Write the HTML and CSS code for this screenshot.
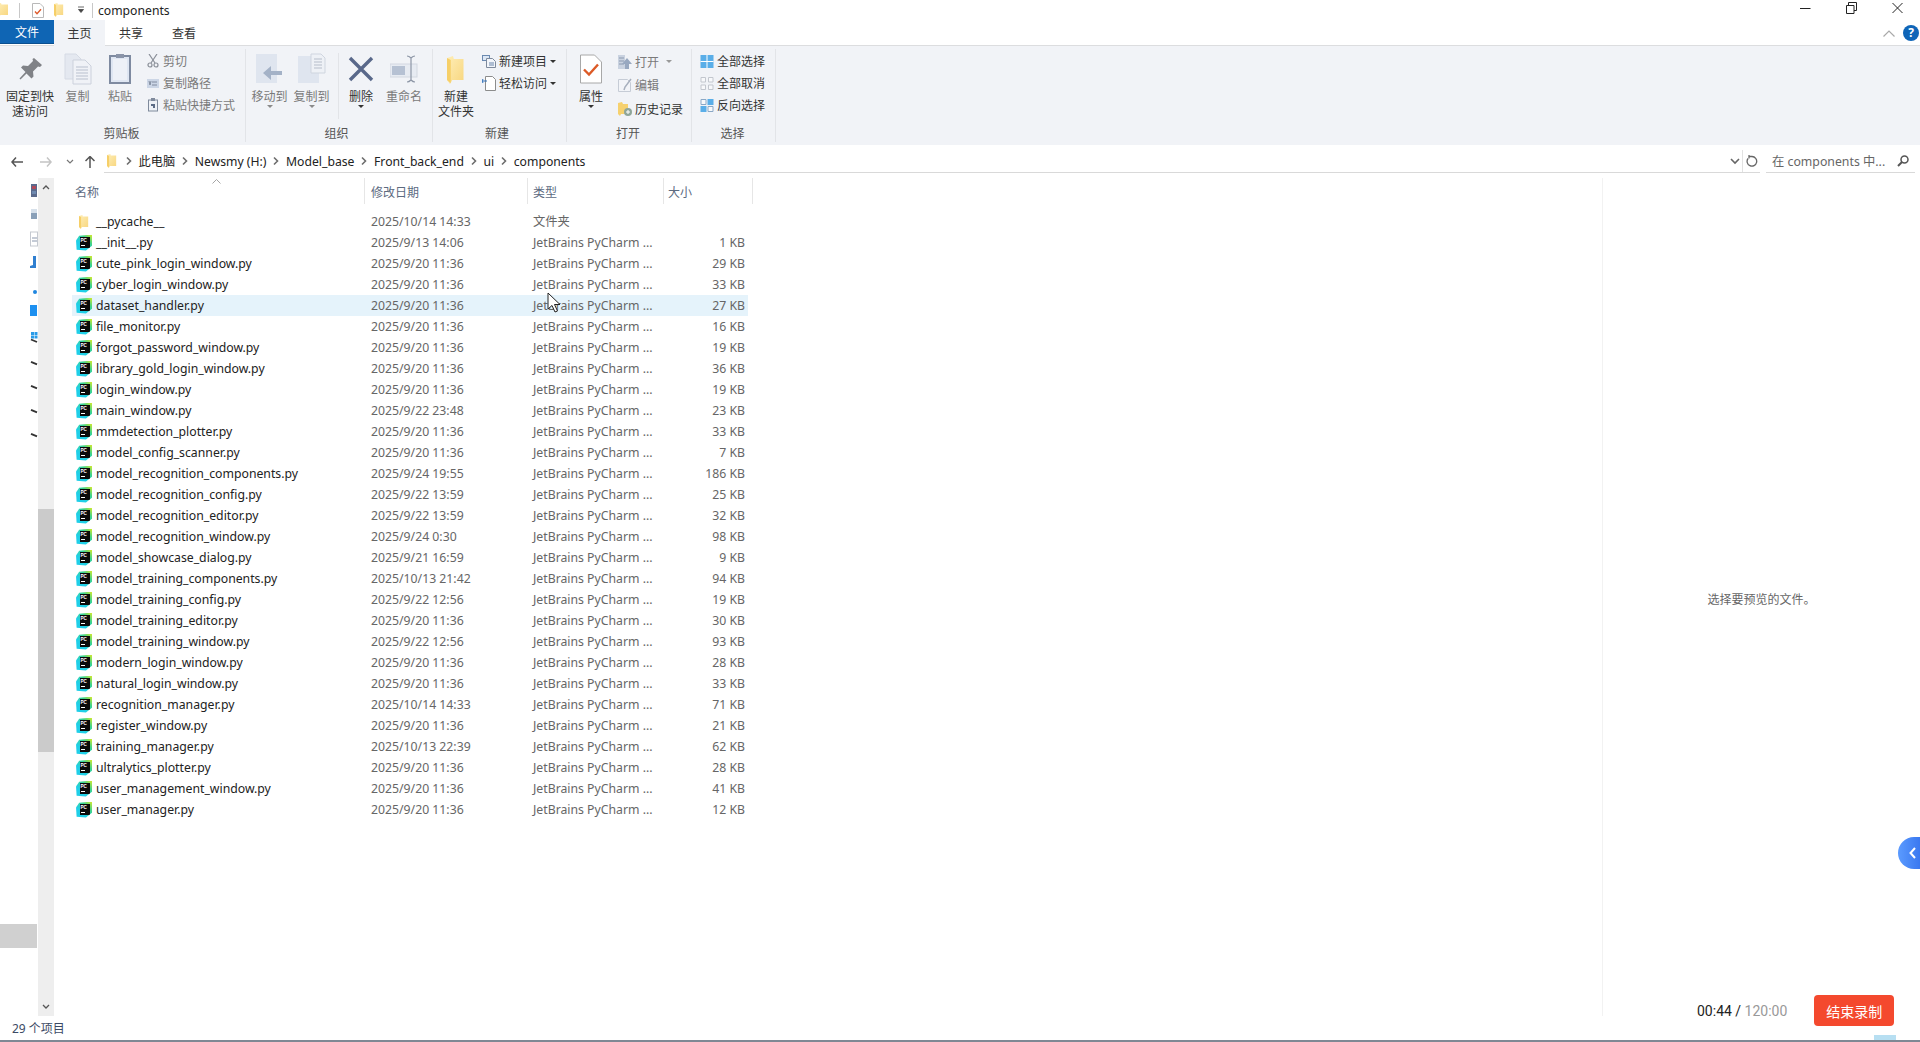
FILE: index.html
```html
<!DOCTYPE html>
<html lang="zh-CN">
<head>
    <meta charset="UTF-8">
    <title>components</title>
    <link rel="stylesheet" href="styles.css">
</head>
<body>
    <svg class="defs" width="0" height="0">
        <defs>
            <linearGradient id="folder-grad" x1="0" y1="0" x2="1" y2="1">
                <stop offset="0" stop-color="#feeeb8"/>
                <stop offset="1" stop-color="#f8d67e"/>
            </linearGradient>
        </defs>
        <symbol id="folder" viewBox="0 0 12 14" preserveAspectRatio="none">
            <path d="M0 1 L4 0 L4.5 1.5 L11 1.5 L11 12 L3.5 12 L2 14 L0 12 Z" fill="url(#folder-grad)"/>
            <path d="M0 1 L2.5 2 L2.5 13.5 L0 12 Z" fill="#f6cf68"/>
        </symbol>
        <symbol id="crumb" viewBox="0 0 8 10">
            <path d="M2 1.5 L5.5 5 L2 8.5" fill="none" stroke="#6d6d6d" stroke-width="1.6"/>
        </symbol>
    </svg>

    <header class="titlebar">
        <svg class="qa-folder-clip" width="9" height="14"><use href="#folder" x="-3" width="12" height="14"/></svg>
        <span class="qa-sep qa-sep-first"></span>
        <svg class="qa-doc" width="12" height="15" viewBox="0 0 12 15"><path d="M.5.5h7.500l3.500 3.500v10.500h-11z" fill="#fff" stroke="#b9b9b9"/><path d="M3 8.500l2 2.200 4-4.500" fill="none" stroke="#dd5a2b" stroke-width="1.400"/></svg>
        <svg class="qa-folder" width="10" height="14"><use href="#folder" width="10" height="14"/></svg>
        <svg class="qa-drop" width="7" height="8" viewBox="0 0 7 8"><path d="M0 1h6M.5 3.500h5l-2.500 3z" stroke="#444" fill="#444" stroke-width=".8"/></svg>
        <span class="qa-sep"></span>
        <span class="title-text">components</span>
        <div class="win-controls">
            <svg width="11" height="12" viewBox="0 0 11 12"><path d="M0 6.500h10.500" stroke="#222"/></svg>
            <svg width="11" height="12" viewBox="0 0 11 12"><path d="M.5 3.500h7.500v8h-7.500zM2.500 3.500v-3h8v8h-2.500" fill="none" stroke="#222"/></svg>
            <svg width="11" height="12" viewBox="0 0 11 12"><path d="M.5 1l10 10M10.500 1l-10 10" stroke="#222"/></svg>
        </div>
    </header>

    <nav class="tabs">
        <div class="tab tab-file">文件</div>
        <div class="tab tab-home">主页</div>
        <div class="tab tab-share">共享</div>
        <div class="tab tab-view">查看</div>
        <div class="tabs-right">
            <svg width="12" height="7" viewBox="0 0 12 7"><path d="M.5 6.500l5.500-5.500 5.500 5.500" fill="none" stroke="#a9a9a9" stroke-width="1.200"/></svg>
            <span class="help">?</span>
        </div>
    </nav>

    <section class="ribbon">
        <div class="group group-clip">
            <div class="group-body">
                <div class="big-btn btn-pin">
                    <svg width="30" height="30" viewBox="0 0 30 30"><path d="M19 4l8 7-2 2-2-.5-5 5 .5 5-2 2-5-5-6 6-1-1 6-6.500-4.500-4.500 2-2 5 .5 5-5-.5-2z" fill="#808287"/></svg>
                    <span>固定到快<br>速访问</span>
                </div>
                <div class="big-btn btn-copy off">
                    <svg width="28" height="32" viewBox="0 0 28 32"><path d="M1 1h11l5 5v20h-16z" fill="#e4e8f0" stroke="#d5dae4"/><path d="M9 7h12l6 6v18h-18z" fill="#f0f2f7" stroke="#ccd1dc"/><path d="M12 14h12M12 17h12M12 20h12M12 23h12M12 26h12" stroke="#b9c0ce"/></svg>
                    <span>复制</span>
                </div>
                <div class="big-btn btn-paste off">
                    <svg width="22" height="32" viewBox="0 0 22 32"><rect x="1" y="3" width="20" height="27" fill="#dfe6f2" stroke="#7e8aa0" stroke-width="2"/><rect x="4" y="6" width="14" height="21" fill="#eef1f7"/><rect x="7" y="1" width="8" height="4" fill="#8a94a8"/></svg>
                    <span>粘贴</span>
                </div>
                <div class="small-col clip-col off">
                    <div class="small-btn">
                        <svg width="12" height="14" viewBox="0 0 12 14"><path d="M2 0l6 9M10 0l-6 9" stroke="#8a8f98" stroke-width="1.200"/><circle cx="3" cy="11" r="2" fill="none" stroke="#8a8f98" stroke-width="1.200"/><circle cx="9" cy="11" r="2" fill="none" stroke="#8a8f98" stroke-width="1.200"/></svg>
                        剪切
                    </div>
                    <div class="small-btn">
                        <svg width="12" height="10" viewBox="0 0 12 10"><rect width="12" height="9" y="1" fill="#ccd6e6"/><path d="M2 3l1 4 1-4M5 4h5M5 7h5" stroke="#6f7a8e" stroke-width=".8" fill="none"/></svg>
                        复制路径
                    </div>
                    <div class="small-btn">
                        <svg width="12" height="14" viewBox="0 0 12 14"><rect x="1.500" y="2" width="9" height="11" fill="#eef1f6" stroke="#7f8a9c"/><rect x="4" y="0" width="4" height="3" fill="#7f8a9c"/><path d="M4 6h4v4h-2v-2h-2z" fill="#5b6b85"/></svg>
                        粘贴快捷方式
                    </div>
                </div>
            </div>
            <div class="group-label">剪贴板</div>
        </div>

        <div class="group group-org">
            <div class="group-body">
                <div class="big-btn btn-move off">
                    <svg width="28" height="30" viewBox="0 0 28 30"><rect x="0" y="0" width="21" height="29" fill="#dfe5ef"/><path d="M26 17h-11v-5l-8 7 8 7v-5h11z" fill="#a4b2c7"/></svg>
                    <span>移动到</span>
                    <i class="caret"></i>
                </div>
                <div class="big-btn btn-copyto off">
                    <svg width="28" height="30" viewBox="0 0 28 30"><rect x="0" y="2" width="21" height="27" fill="#dfe5ef"/><path d="M13 0h10l4 4v15h-14z" fill="#eef1f6" stroke="#cfd5df"/><path d="M16 5h8M16 8h8M16 11h8M16 14h8" stroke="#b6bdca"/></svg>
                    <span>复制到</span>
                    <i class="caret"></i>
                </div>
                <span class="v-line"></span>
                <div class="big-btn btn-del">
                    <svg width="26" height="26" viewBox="0 0 26 26"><path d="M2 2l22 22M24 2l-22 22" stroke="#59688a" stroke-width="3.400"/></svg>
                    <span>删除</span>
                    <i class="caret dark"></i>
                </div>
                <div class="big-btn btn-rename off">
                    <svg width="28" height="28" viewBox="0 0 28 28"><rect x="0" y="9" width="27" height="13" fill="#e7ebf2" stroke="#d3d8e1"/><rect x="2" y="11" width="13" height="9" fill="#b6c1d3"/><path d="M17 1c2 0 3 1 4 2 1-1 2-2 4-2M21 3v22M17 27c2 0 3-1 4-2 1 1 2 2 4 2" fill="none" stroke="#8d96a6" stroke-width="1.200"/></svg>
                    <span>重命名</span>
                </div>
            </div>
            <div class="group-label">组织</div>
        </div>

        <div class="group group-new">
            <div class="group-body">
                <div class="big-btn btn-newfolder">
                    <svg class="big-folder" width="18" height="28"><use href="#folder" width="18" height="28"/></svg>
                    <span>新建<br>文件夹</span>
                </div>
                <div class="small-col new-col">
                    <div class="small-btn">
                        <svg width="14" height="13" viewBox="0 0 14 13"><rect x=".5" y=".5" width="7" height="5" fill="#dce7f5" stroke="#6b89b0"/><path d="M4.500 3.500h6l3 3v6h-9z" fill="#f2f5fa" stroke="#7e8a9c"/><rect x="7" y="7" width="5" height="4" fill="#aebdd2"/></svg>
                        新建项目<i class="drop"></i>
                    </div>
                    <div class="small-btn">
                        <svg width="14" height="15" viewBox="0 0 14 15"><path d="M3.500.5h7l3 3v11h-10z" fill="#fff" stroke="#8c8c8c"/><path d="M0 5h5M1 3L0 5l1 2" stroke="#2e6fb8" fill="none"/></svg>
                        轻松访问<i class="drop"></i>
                    </div>
                </div>
            </div>
            <div class="group-label">新建</div>
        </div>

        <div class="group group-open">
            <div class="group-body">
                <div class="big-btn btn-props">
                    <svg width="22" height="29" viewBox="0 0 22 29"><path d="M.5.5h14l7 7v21h-21z" fill="#fff" stroke="#a8a8a8"/><path d="M4 15l5 5 9-10" fill="none" stroke="#dc5a26" stroke-width="2.400"/></svg>
                    <span>属性</span>
                    <i class="caret dark"></i>
                </div>
                <div class="small-col open-col">
                    <div class="small-btn off">
                        <svg width="14" height="14" viewBox="0 0 14 14"><rect width="7" height="14" fill="#c9d2e0"/><path d="M1 3h5M1 6h5M1 9h5" stroke="#8c9ab0"/><path d="M9 3l5 6h-3v5h-4v-5h-3z" fill="#98a8c0"/></svg>
                        打开<i class="drop pale"></i>
                    </div>
                    <div class="small-btn off">
                        <svg width="14" height="14" viewBox="0 0 14 14"><path d="M.5 1.500h9l3 3v9h-12z" fill="#f2f4f8" stroke="#c6ccd6"/><path d="M13 1l-6 8-1 3" stroke="#a7afbd" stroke-width="1.500" fill="none"/></svg>
                        编辑
                    </div>
                    <div class="small-btn">
                        <svg width="14" height="14" viewBox="0 0 14 14"><path d="M0 1l4-1 1 2h5v10h-7l-1 2-2-2z" fill="#f6d16f"/><circle cx="10" cy="10" r="4" fill="#8fa69a"/><path d="M8 10h4M10 8v4" stroke="#fff"/></svg>
                        历史记录
                    </div>
                </div>
            </div>
            <div class="group-label">打开</div>
        </div>

        <div class="group group-select">
            <div class="group-body">
                <div class="small-col select-col">
                    <div class="small-btn">
                        <svg width="13" height="13" viewBox="0 0 13 13"><rect width="13" height="13" fill="#5aaee8"/><path d="M6.500 0v13M0 6.500h13" stroke="#fff"/></svg>
                        全部选择
                    </div>
                    <div class="small-btn">
                        <svg width="13" height="13" viewBox="0 0 13 13"><path d="M.5.5h4.500v4.500h-4.500zM8 .5h4.500v4.500h-4.500zM.5 8h4.500v4.500h-4.500zM8 8h4.500v4.500h-4.500z" fill="#f8f9fb" stroke="#c3c7ce"/></svg>
                        全部取消
                    </div>
                    <div class="small-btn">
                        <svg width="13" height="13" viewBox="0 0 13 13"><rect x="7" width="6" height="6" fill="#5aaee8"/><rect y="7" width="6" height="6" fill="#5aaee8"/><path d="M.5.5h5v5h-5zM7.500 7.500h5v5h-5z" fill="#f8f9fb" stroke="#8ba8c6"/></svg>
                        反向选择
                    </div>
                </div>
            </div>
            <div class="group-label">选择</div>
        </div>
    </section>

    <div class="addressbar">
        <div class="nav-arrows">
            <svg width="12" height="10" viewBox="0 0 12 10"><path d="M5 .5L1 5l4 4.500M1 5h11" fill="none" stroke="#555" stroke-width="1.500"/></svg>
            <svg class="arrow-fwd" width="12" height="10" viewBox="0 0 12 10"><path d="M7 .5L11 5l-4 4.500M11 5H0" fill="none" stroke="#c4c4c4" stroke-width="1.500"/></svg>
            <svg class="arrow-down" width="8" height="6" viewBox="0 0 8 6"><path d="M1 1l3 3 3-3" fill="none" stroke="#777" stroke-width="1.200"/></svg>
            <svg class="arrow-up" width="10" height="12" viewBox="0 0 10 12"><path d="M.5 5L5 .5 9.500 5M5 .5V12" fill="none" stroke="#555" stroke-width="1.500"/></svg>
        </div>
        <div class="crumbs">
            <svg class="crumb-folder" width="10" height="14"><use href="#folder" width="10" height="14"/></svg>
            <svg class="chev" width="8" height="10"><use href="#crumb"/></svg>
            <span>此电脑</span>
            <svg class="chev" width="8" height="10"><use href="#crumb"/></svg>
            <span>Newsmy (H:)</span>
            <svg class="chev" width="8" height="10"><use href="#crumb"/></svg>
            <span>Model_base</span>
            <svg class="chev" width="8" height="10"><use href="#crumb"/></svg>
            <span>Front_back_end</span>
            <svg class="chev" width="8" height="10"><use href="#crumb"/></svg>
            <span>ui</span>
            <svg class="chev" width="8" height="10"><use href="#crumb"/></svg>
            <span>components</span>
            <svg class="addr-down" width="10" height="7" viewBox="0 0 10 7"><path d="M1 1l4 4 4-4" fill="none" stroke="#666" stroke-width="1.600"/></svg>
            <span class="addr-refresh">
                <svg width="12" height="12" viewBox="0 0 12 12"><path d="M2 3.500A4.800 4.800 0 1 0 6 1.500H3M3 0v3.500" fill="none" stroke="#666" stroke-width="1.300"/></svg>
            </span>
        </div>
        <div class="searchbox">
            <span>在 components 中...</span>
            <svg width="12" height="12" viewBox="0 0 12 12"><circle cx="7.500" cy="4.500" r="3.500" fill="none" stroke="#555" stroke-width="1.500"/><path d="M5 7l-4 4" stroke="#555" stroke-width="2"/></svg>
        </div>
    </div>

    <main class="main">
        <aside class="navpane">
            <div class="nav-rows">
                <svg width="8" height="24" viewBox="0 0 8 24"><rect x="1" y="2" width="6" height="13" fill="#5b6a8c"/><rect x="2" y="4" width="4" height="3" fill="#b04a5a"/><rect x="2" y="9" width="4" height="3" fill="#6f8ab0"/></svg>
                <svg width="8" height="24" viewBox="0 0 8 24"><rect x="1" y="3" width="6" height="10" fill="#8aa0b8"/><rect x="1" y="3" width="6" height="4" fill="#d6e0ea"/></svg>
                <svg width="8" height="24" viewBox="0 0 8 24"><rect x=".5" y="2" width="7" height="14" fill="#fff" stroke="#c5c9d0"/><path d="M2 8h5M2 11h5" stroke="#8a97ad"/></svg>
                <svg width="8" height="24" viewBox="0 0 8 24"><path d="M3 2h3v12H0v-2l3-1z" fill="#2f7fd0"/></svg>
                <svg width="8" height="24" viewBox="0 0 8 24"><circle cx="5" cy="14" r="2" fill="#1f86df"/></svg>
                <svg width="8" height="24" viewBox="0 0 8 24"><rect x="0" y="3" width="7" height="11" fill="#1d90f0"/></svg>
                <svg width="8" height="24" viewBox="0 0 8 24"><rect x="1" y="6" width="3" height="3" fill="#2a9be8"/><rect x="4.500" y="6" width="3" height="3" fill="#2a9be8"/><rect x="1" y="9.500" width="3" height="3" fill="#2a9be8"/><rect x="4.500" y="9.500" width="3" height="3" fill="#2a9be8"/><path d="M1 13.500l6 2.500" stroke="#333" stroke-width="1.800"/></svg>
                <svg width="8" height="24" viewBox="0 0 8 24"><path d="M1 11.800l6 2.500" stroke="#333" stroke-width="1.800"/></svg>
                <svg width="8" height="24" viewBox="0 0 8 24"><path d="M1 11.800l6 2.500" stroke="#333" stroke-width="1.800"/></svg>
                <svg width="8" height="24" viewBox="0 0 8 24"><path d="M1 11.800l6 2.500" stroke="#333" stroke-width="1.800"/></svg>
                <svg width="8" height="24" viewBox="0 0 8 24"><path d="M1 11.800l6 2.500" stroke="#333" stroke-width="1.800"/></svg>
            </div>
            <div class="nav-selected"></div>
        </aside>

        <div class="scrollbar">
            <svg class="sb-up" width="8" height="6" viewBox="0 0 8 6"><path d="M1 5l3-3 3 3" fill="none" stroke="#555" stroke-width="1.300"/></svg>
            <div class="sb-thumb"></div>
            <svg class="sb-down" width="8" height="6" viewBox="0 0 8 6"><path d="M1 1l3 3 3-3" fill="none" stroke="#555" stroke-width="1.300"/></svg>
        </div>

        <div class="listpane">
            <div class="list-head">
                <div class="hcell hcell-name">名称</div>
                <div class="hcell hcell-date">修改日期</div>
                <div class="hcell hcell-type">类型</div>
                <div class="hcell hcell-size">大小</div>
                <svg class="sort-caret" width="9" height="5" viewBox="0 0 9 5"><path d="M.5 4.500l4-4 4 4" fill="none" stroke="#a5a5a5"/></svg>
            </div>
            <div class="rows">
                <div class="row"><div class="name"><svg class="ico-folder" width="10" height="14"><use href="#folder" width="10" height="14"/></svg>__pycache__</div><div>2025/10/14 14:33</div><div>文件夹</div><div class="size"></div></div>
                <div class="row"><div class="name"><span class="ico"><b>PC</b></span>__init__.py</div><div>2025/9/13 14:06</div><div>JetBrains PyCharm ...</div><div class="size">1 KB</div></div>
                <div class="row"><div class="name"><span class="ico"><b>PC</b></span>cute_pink_login_window.py</div><div>2025/9/20 11:36</div><div>JetBrains PyCharm ...</div><div class="size">29 KB</div></div>
                <div class="row"><div class="name"><span class="ico"><b>PC</b></span>cyber_login_window.py</div><div>2025/9/20 11:36</div><div>JetBrains PyCharm ...</div><div class="size">33 KB</div></div>
                <div class="row hover"><div class="name"><span class="ico"><b>PC</b></span>dataset_handler.py</div><div>2025/9/20 11:36</div><div>JetBrains PyCharm ...</div><div class="size">27 KB</div></div>
                <div class="row"><div class="name"><span class="ico"><b>PC</b></span>file_monitor.py</div><div>2025/9/20 11:36</div><div>JetBrains PyCharm ...</div><div class="size">16 KB</div></div>
                <div class="row"><div class="name"><span class="ico"><b>PC</b></span>forgot_password_window.py</div><div>2025/9/20 11:36</div><div>JetBrains PyCharm ...</div><div class="size">19 KB</div></div>
                <div class="row"><div class="name"><span class="ico"><b>PC</b></span>library_gold_login_window.py</div><div>2025/9/20 11:36</div><div>JetBrains PyCharm ...</div><div class="size">36 KB</div></div>
                <div class="row"><div class="name"><span class="ico"><b>PC</b></span>login_window.py</div><div>2025/9/20 11:36</div><div>JetBrains PyCharm ...</div><div class="size">19 KB</div></div>
                <div class="row"><div class="name"><span class="ico"><b>PC</b></span>main_window.py</div><div>2025/9/22 23:48</div><div>JetBrains PyCharm ...</div><div class="size">23 KB</div></div>
                <div class="row"><div class="name"><span class="ico"><b>PC</b></span>mmdetection_plotter.py</div><div>2025/9/20 11:36</div><div>JetBrains PyCharm ...</div><div class="size">33 KB</div></div>
                <div class="row"><div class="name"><span class="ico"><b>PC</b></span>model_config_scanner.py</div><div>2025/9/20 11:36</div><div>JetBrains PyCharm ...</div><div class="size">7 KB</div></div>
                <div class="row"><div class="name"><span class="ico"><b>PC</b></span>model_recognition_components.py</div><div>2025/9/24 19:55</div><div>JetBrains PyCharm ...</div><div class="size">186 KB</div></div>
                <div class="row"><div class="name"><span class="ico"><b>PC</b></span>model_recognition_config.py</div><div>2025/9/22 13:59</div><div>JetBrains PyCharm ...</div><div class="size">25 KB</div></div>
                <div class="row"><div class="name"><span class="ico"><b>PC</b></span>model_recognition_editor.py</div><div>2025/9/22 13:59</div><div>JetBrains PyCharm ...</div><div class="size">32 KB</div></div>
                <div class="row"><div class="name"><span class="ico"><b>PC</b></span>model_recognition_window.py</div><div>2025/9/24 0:30</div><div>JetBrains PyCharm ...</div><div class="size">98 KB</div></div>
                <div class="row"><div class="name"><span class="ico"><b>PC</b></span>model_showcase_dialog.py</div><div>2025/9/21 16:59</div><div>JetBrains PyCharm ...</div><div class="size">9 KB</div></div>
                <div class="row"><div class="name"><span class="ico"><b>PC</b></span>model_training_components.py</div><div>2025/10/13 21:42</div><div>JetBrains PyCharm ...</div><div class="size">94 KB</div></div>
                <div class="row"><div class="name"><span class="ico"><b>PC</b></span>model_training_config.py</div><div>2025/9/22 12:56</div><div>JetBrains PyCharm ...</div><div class="size">19 KB</div></div>
                <div class="row"><div class="name"><span class="ico"><b>PC</b></span>model_training_editor.py</div><div>2025/9/20 11:36</div><div>JetBrains PyCharm ...</div><div class="size">30 KB</div></div>
                <div class="row"><div class="name"><span class="ico"><b>PC</b></span>model_training_window.py</div><div>2025/9/22 12:56</div><div>JetBrains PyCharm ...</div><div class="size">93 KB</div></div>
                <div class="row"><div class="name"><span class="ico"><b>PC</b></span>modern_login_window.py</div><div>2025/9/20 11:36</div><div>JetBrains PyCharm ...</div><div class="size">28 KB</div></div>
                <div class="row"><div class="name"><span class="ico"><b>PC</b></span>natural_login_window.py</div><div>2025/9/20 11:36</div><div>JetBrains PyCharm ...</div><div class="size">33 KB</div></div>
                <div class="row"><div class="name"><span class="ico"><b>PC</b></span>recognition_manager.py</div><div>2025/10/14 14:33</div><div>JetBrains PyCharm ...</div><div class="size">71 KB</div></div>
                <div class="row"><div class="name"><span class="ico"><b>PC</b></span>register_window.py</div><div>2025/9/20 11:36</div><div>JetBrains PyCharm ...</div><div class="size">21 KB</div></div>
                <div class="row"><div class="name"><span class="ico"><b>PC</b></span>training_manager.py</div><div>2025/10/13 22:39</div><div>JetBrains PyCharm ...</div><div class="size">62 KB</div></div>
                <div class="row"><div class="name"><span class="ico"><b>PC</b></span>ultralytics_plotter.py</div><div>2025/9/20 11:36</div><div>JetBrains PyCharm ...</div><div class="size">28 KB</div></div>
                <div class="row"><div class="name"><span class="ico"><b>PC</b></span>user_management_window.py</div><div>2025/9/20 11:36</div><div>JetBrains PyCharm ...</div><div class="size">41 KB</div></div>
                <div class="row"><div class="name"><span class="ico"><b>PC</b></span>user_manager.py</div><div>2025/9/20 11:36</div><div>JetBrains PyCharm ...</div><div class="size">12 KB</div></div>
            </div>
        </div>

        <aside class="preview">选择要预览的文件。</aside>
    </main>

    <footer class="statusbar">29 个项目</footer>

    <svg class="cursor" width="14" height="22" viewBox="0 0 14 22"><path d="M1 1v16l4-3.500 3 6.500 2.500-1-3-6.500h5.500z" fill="#fff" stroke="#222"/></svg>
    <div class="side-handle">
        <svg width="7" height="12" viewBox="0 0 7 12"><path d="M6 1L1.500 6 6 11" fill="none" stroke="#fff" stroke-width="2"/></svg>
    </div>
    <div class="recorder">
        <span class="rec-time">00:44 / <span class="rec-total">120:00</span></span>
        <button class="rec-stop">结束录制</button>
    </div>
    <div class="task-sliver"></div>
</body>
</html>
```

FILE: styles.css
```css
* {
    box-sizing: border-box;
}
html, body {
    height: 100%;
}
body {
    margin: 0;
    height: 1042px;
    overflow: hidden;
    display: flex;
    flex-direction: column;
    position: relative;
    background-color: #fff;
    color: #333;
    font-family: "Noto Sans", "Noto Sans CJK SC", sans-serif;
    font-size: 12px;
    border-bottom: 2px solid #7f8894;
}
svg {
    display: block;
    flex: none;
}
.defs {
    position: absolute;
}

/* title bar */
.titlebar {
    height: 20px;
    display: flex;
    align-items: center;
    flex: none;
}
.qa-sep {
    width: 1px;
    height: 15px;
    background-color: #c8c8c8;
}
.qa-sep-first {
    margin-left: 10px;
}
.qa-doc {
    margin-left: 12px;
}
.qa-folder {
    margin-left: 10px;
}
.qa-drop {
    margin-left: 14px;
}
.qa-sep:not(.qa-sep-first) {
    margin-left: 7px;
}
.title-text {
    margin-left: 5px;
    font-size: 12.200px;
    color: #222;
}
.win-controls {
    margin-left: auto;
    display: flex;
    gap: 35px;
    padding-right: 17px;
    margin-top: -5px;
}

/* tabs */
.tabs {
    height: 26px;
    display: flex;
    flex: none;
    border-bottom: 1px solid #dcdddf;
    position: relative;
}
.tab {
    height: 26px;
    line-height: 28px;
    text-align: center;
    color: #333;
}
.tab-file {
    width: 54px;
    height: 24px;
    line-height: 25px;
    background-color: #0f65b4;
    border-bottom: 1px solid #0b4f8f;
    color: #fff;
}
.tab-home {
    width: 51px;
    background-color: #f1f3f7;
}
.tab-share {
    padding-left: 14px;
    text-align: left;
    width: 67px;
}
.tab-view {
    width: 40px;
    text-align: left;
}
.tabs-right {
    margin-left: auto;
    display: flex;
    align-items: center;
    gap: 8px;
    padding-right: 1px;
    height: 26px;
}
.help {
    width: 16px;
    height: 16px;
    border-radius: 50%;
    background-color: #0f65b8;
    color: #fff;
    font-weight: bold;
    font-size: 12px;
    line-height: 16px;
    text-align: center;
}

/* ribbon */
.ribbon {
    height: 99px;
    flex: none;
    display: flex;
    background-color: #f1f3f7;
}
.group {
    display: flex;
    flex-direction: column;
    border-right: 1px solid #e2e4e8;
    margin-top: 3px;
    height: 93px;
}
.group-clip {
    width: 246px;
}
.group-org {
    width: 187px;
}
.group-new {
    width: 134px;
}
.group-open {
    width: 125px;
}
.group-select {
    width: 84px;
}
.group-body {
    height: 78px;
    display: flex;
    position: relative;
}
.group-label {
    text-align: center;
    color: #555;
    line-height: 17px;
    padding-right: 2px;
}
.group-org .group-label,
.group-new .group-label {
    padding-right: 5px;
}
.big-btn {
    display: flex;
    flex-direction: column;
    align-items: center;
    position: relative;
    line-height: 15px;
    text-align: center;
    flex: none;
}
.big-btn svg {
    height: 34px;
    margin-top: 3px;
    margin-bottom: 3px;
}
.big-btn svg.big-folder {
    height: 28px;
    margin-top: 7px;
    margin-bottom: 5px;
}
.big-btn span {
    white-space: nowrap;
}
.off {
    color: #7a7a7a;
}
.btn-pin {
    width: 60px;
}
.btn-copy {
    width: 35px;
}
.btn-paste {
    width: 48px;
    margin-left: 1px;
}
.btn-move {
    width: 47px;
}
.btn-copyto {
    width: 37px;
}
.btn-del {
    width: 44px;
}
.btn-rename {
    width: 42px;
}
.btn-newfolder {
    width: 46px;
}
.btn-props {
    width: 48px;
}
.v-line {
    width: 1px;
    height: 66px;
    background-color: #e2e4e8;
    margin: 4px 0 0 8px;
    flex: none;
}
.caret {
    width: 0;
    height: 0;
    border: 3px solid transparent;
    border-top: 3px solid #8a8a8a;
    border-bottom: 0;
    margin-top: 1px;
}
.caret.dark {
    border-top-color: #333;
}
.small-col {
    display: flex;
    flex-direction: column;
    padding-top: 1px;
}
.small-btn {
    height: 22px;
    display: flex;
    align-items: center;
    gap: 3px;
    white-space: nowrap;
}
.small-btn svg {
    width: 14px;
}
.clip-col {
    margin-left: 2px;
}
.new-col {
    margin-left: 3px;
}
.open-col {
    padding-top: 1px;
    margin-left: 3px;
    color: #333;
}
.open-col .small-btn {
    height: 23.500px;
}
.open-col .off {
    color: #7a7a7a;
}
.select-col {
    margin-left: 8px;
}
.drop {
    width: 0;
    height: 0;
    border: 3px solid transparent;
    border-top: 3px solid #333;
    border-bottom: 0;
}
.drop.pale {
    border-top-color: #999;
    margin-left: 4px;
}

/* address bar */
.addressbar {
    flex: none;
    height: 28px;
    padding-top: 5px;
    display: flex;
    align-items: stretch;
}
.nav-arrows {
    width: 104px;
    display: flex;
    align-items: center;
    padding-left: 11px;
}
.arrow-fwd {
    margin-left: 17px;
}
.arrow-down {
    margin-left: 14px;
}
.arrow-up {
    margin-left: 11px;
}
.crumbs {
    width: 1656px;
    display: flex;
    align-items: center;
    gap: 5.800px;
    border-bottom: 1px solid #d9d9d9;
    font-size: 12.200px;
    color: #222;
    padding-left: 3px;
}
.crumb-folder {
    margin-right: 2px;
}
.addr-down {
    margin-left: auto;
}
.addr-refresh {
    width: 18px;
    height: 100%;
    border-left: 1px solid #e2e2e2;
    margin-left: -4px;
    display: flex;
    align-items: center;
    justify-content: center;
}
.searchbox {
    width: 149px;
    margin-left: 6px;
    display: flex;
    align-items: center;
    justify-content: space-between;
    padding: 0 6px;
    border-bottom: 1px solid #d9d9d9;
    color: #666;
    font-size: 12.300px;
    white-space: nowrap;
}

/* main area */
.main {
    flex: 1;
    display: flex;
    min-height: 0;
}
.navpane {
    width: 38px;
    position: relative;
    flex: none;
}
.nav-rows {
    display: flex;
    flex-direction: column;
    align-items: flex-end;
    padding-top: 9px;
}
.nav-selected {
    position: absolute;
    left: 0;
    right: 1px;
    top: 751px;
    height: 24px;
    background-color: #d0d0d0;
}
.scrollbar {
    width: 16px;
    margin-top: 5px;
    background-color: #eeeeee;
    display: flex;
    flex-direction: column;
    align-items: center;
    flex: none;
}
.sb-up {
    margin-top: 6px;
}
.sb-thumb {
    width: 16px;
    height: 243px;
    margin-top: 319px;
    background-color: #cbcbcb;
}
.sb-down {
    margin-top: auto;
    margin-bottom: 6px;
}
.listpane {
    width: 1548px;
    flex: none;
    padding: 5px 0 0 18px;
    position: relative;
    font-size: 12.250px;
}
.list-head {
    display: flex;
    height: 26px;
    color: #5c6a7f;
    font-size: 12px;
    line-height: 29px;
    margin-bottom: 7px;
}
.hcell {
    border-right: 1px solid #e6e6e6;
}
.hcell-name {
    width: 293px;
    padding-left: 3px;
}
.hcell-date {
    width: 163px;
    padding-left: 6px;
}
.hcell-type {
    width: 136px;
    padding-left: 5px;
}
.hcell-size {
    width: 89px;
    padding-left: 4px;
}
.sort-caret {
    position: absolute;
    left: 158px;
    top: 6px;
}
.row {
    width: 676px;
    height: 21px;
    display: grid;
    grid-template-columns: 299px 162px 130px 82px;
    align-items: center;
    line-height: 21px;
    color: #666;
    white-space: nowrap;
}
.row.hover {
    background-color: #e5f3fb;
}
.name {
    display: flex;
    align-items: center;
    padding-left: 4px;
    color: #222;
}
.ico {
    width: 16px;
    height: 16px;
    margin-right: 4px;
    flex: none;
    display: block;
    padding: 2.500px 0 0 3.500px;
    background: linear-gradient(45deg, #1fcfe8 35%, #3ed38a 70%, #d6ea2c 100%);
    clip-path: polygon(20% 8%, 100% 0, 100% 70%, 62% 100%, 4% 96%, 0 38%);
}
.ico b {
    display: block;
    width: 10.500px;
    height: 10.500px;
    padding: 1px 0 0 1px;
    background-color: #0b0b0b;
    color: #fff;
    font-family: "Liberation Sans", sans-serif;
    font-size: 4.600px;
    line-height: 5px;
}
.ico b::after {
    content: "";
    display: block;
    width: 4px;
    height: 1px;
    margin-top: 1.500px;
    background-color: #fff;
}
.ico-folder {
    margin: 0 7px 0 3px;
}
.size {
    text-align: right;
}
.preview {
    flex: 1;
    border-left: 1px solid #f2f2f2;
    margin-top: 5px;
    display: flex;
    align-items: center;
    justify-content: center;
    color: #666;
    padding-top: 3px;
}
.statusbar {
    height: 24px;
    flex: none;
    padding-left: 12px;
    line-height: 26px;
    color: #3c4a64;
}

/* things over the window */
.cursor {
    position: absolute;
    left: 547px;
    top: 292px;
}
.side-handle {
    position: absolute;
    right: 0;
    top: 837px;
    width: 22px;
    height: 32px;
    border-radius: 16px 0 0 16px;
    background: linear-gradient(90deg, #5b9bff, #3a78f0);
    display: flex;
    align-items: center;
    padding-left: 11px;
}
.recorder {
    position: absolute;
    left: 1697px;
    top: 995px;
    display: flex;
    align-items: center;
    gap: 27px;
}
.rec-time {
    font-family: Roboto, sans-serif;
    font-size: 14px;
    color: #222;
    white-space: nowrap;
}
.rec-total {
    color: #999;
}
.rec-stop {
    width: 80px;
    height: 31px;
    border: none;
    border-radius: 4px;
    padding: 0;
    background-color: #f4492e;
    color: #fff;
    font-family: "Noto Sans CJK SC", sans-serif;
    font-size: 14px;
}
.task-sliver {
    position: absolute;
    left: 1874px;
    bottom: 0;
    width: 22px;
    height: 5px;
    background-color: #b7dff2;
}
```
